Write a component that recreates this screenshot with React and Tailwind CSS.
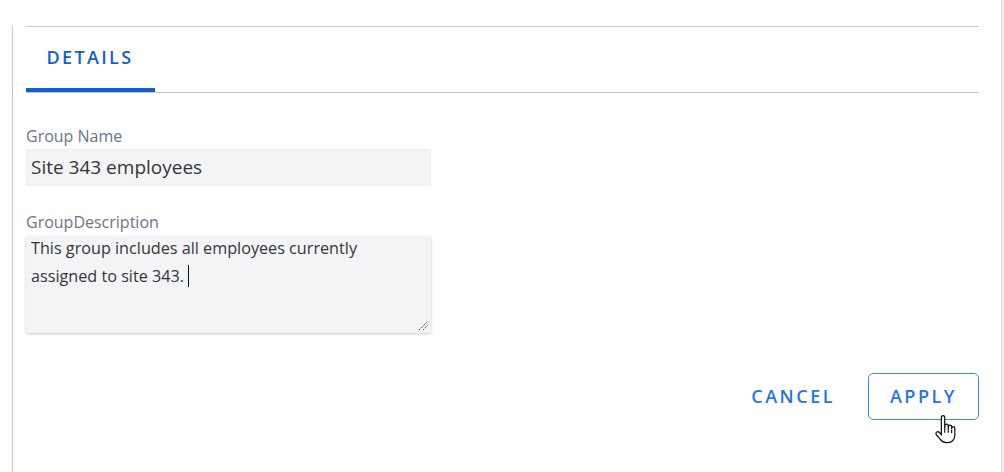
import React from 'react';

const font = { fontFamily: '"Open Sans", "Liberation Sans", sans-serif' };

function HandCursor() {
  return (
    <svg width="28" height="34" viewBox="0 0 24 30" className="absolute left-[933px] top-[414px]">
      <path
        d="M8.5 1.5c.9 0 1.5.7 1.5 1.6v9.4l.2-2.2c.1-.9.7-1.4 1.5-1.4s1.4.6 1.4 1.5v2l.2-1.2c.1-.8.7-1.3 1.4-1.3.8 0 1.4.6 1.4 1.4v1.8l.2-.9c.1-.7.7-1.1 1.3-1.1.8 0 1.3.6 1.3 1.4v6.5c0 3.5-2.6 6.2-6 6.2h-1.6c-2.2 0-3.8-1-5-2.6L2.6 18.3c-.6-.8-.4-1.9.4-2.4.7-.5 1.7-.3 2.3.4L7 18.5V3.1c0-.9.6-1.6 1.5-1.6z"
        fill="#fff"
        stroke="#111"
        strokeWidth="1.1"
        strokeLinejoin="round"
      />
      <path d="M10 12.5v4M13.1 12.5v4M16.1 14v3" stroke="#111" strokeWidth="1" />
    </svg>
  );
}

export default function App() {
  return (
    <div className="relative flex h-[472px] w-[1004px] overflow-hidden bg-white" style={font}>
      {/* panel */}
      <div className="flex-1 pl-[12px] pt-[12px]">
        <div className="h-full border-l border-[#c4c8d2] pl-[13px] pr-[22px]">
          <div className="mt-[14px] border-t border-[#c4c8d2]">
            {/* Tabs */}
            <div className="flex border-b border-[#c4c8d2]">
              <div className="flex h-[65px] w-[129px] items-center justify-center border-b-[4px] border-[#1160cc] pr-[1px] text-[18px] font-semibold tracking-[0.13em] text-[#1160cc]">
                DETAILS
              </div>
            </div>

            {/* Form */}
            <div className="w-[405px] pt-[32px]">
              <label className="block text-[16px] leading-[22px] text-[#6b7585]">Group Name</label>
              <div className="mt-[2px] h-[37px] rounded-[2px] border border-[#eceef1] bg-[#f3f4f6] pl-[4px] text-[19px] leading-[35px] text-[#353535]">
                Site 343 employees
              </div>

              <label className="mt-[25px] block text-[16px] leading-[22px] text-[#6b7585]">GroupDescription</label>
              <div className="relative mt-[3px] h-[97px] rounded-[2px] bg-[#f3f4f6] pl-[5px] pr-[40px] pt-[1px] text-[16.2px] leading-[23px] text-[#353535] shadow-[0_1px_3px_rgba(0,0,0,0.22)]">
                This group includes all employees currently assigned to site 343.
                <span className="ml-[4px] inline-block h-[22px] w-px translate-y-[5px] bg-[#111]" />
                <svg width="11" height="11" viewBox="0 0 11 11" className="absolute bottom-[2px] right-[2px]">
                  <path d="M1 10L10 1M5 10L10 5" stroke="#555" strokeWidth="1" strokeDasharray="1.5 1" />
                </svg>
              </div>
            </div>

            {/* Actions */}
            <div className="mt-[40px] flex justify-end gap-[10px]">
              <button className="h-[47px] px-[23px] text-[18px] font-semibold tracking-[0.14em] text-[#2676dd]">
                CANCEL
              </button>
              <button className="h-[47px] w-[111px] rounded-[5px] border border-[#3f8ae6] text-[18px] font-semibold tracking-[0.14em] text-[#2676dd]">
                APPLY
              </button>
            </div>
          </div>
        </div>
      </div>
      {/* right edge */}
      <div className="w-[3px] border-l border-[#dcdcdc] bg-[#efefef]" />
      <HandCursor />
    </div>
  );
}
